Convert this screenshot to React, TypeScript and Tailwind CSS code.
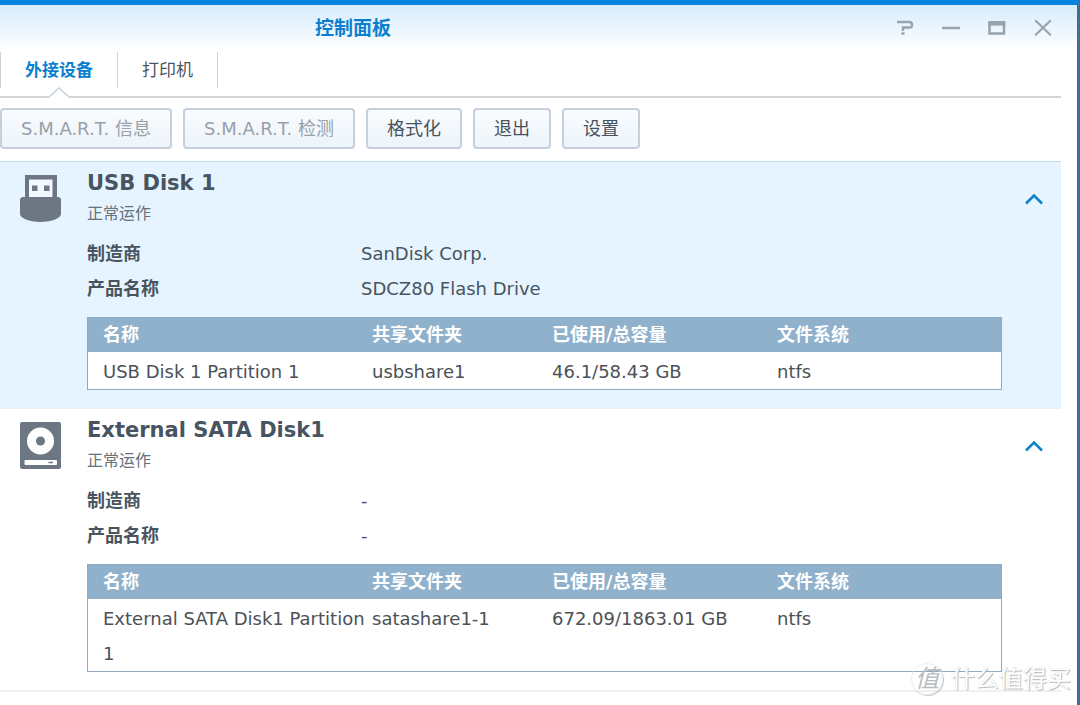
import React from 'react';

type Partition = { name: string; share: string; usage: string; fs: string };

type Device = {
  name: string;
  status: string;
  vendor: string;
  product: string;
  icon: React.ReactNode;
  selected: boolean;
  partitions: Partition[];
};

const UsbIcon = () => (
  <svg className="h-[48px] w-[41px]" viewBox="0 0 41 48" aria-hidden="true">
    <path fill="#6c7783" d="M5 0h32v22h2l2 2v15c0 4-9 8-20.500 8S0 43 0 39V24l2-2h3z" />
    <path fill="#f1f9ff" d="M9 4.500h23.500V22H9z" />
    <path fill="#6c7783" d="M12 10.500h5.500v5.500H12zM24 10.500h5.500v5.500H24z" />
  </svg>
);

const SataIcon = () => (
  <svg className="h-[48px] w-[41px]" viewBox="0 0 41 48" aria-hidden="true">
    <rect width="41" height="47" rx="2" fill="#6c7783" />
    <circle cx="20.500" cy="19" r="13.500" fill="#fff" />
    <circle cx="20.500" cy="19" r="4.500" fill="#6c7783" />
    <rect x="4.500" y="38" width="32.500" height="5" rx="1" fill="#fff" />
    <path d="M28.500 40.500h4.500" stroke="#6c7783" strokeWidth="1.500" />
  </svg>
);

const devices: Device[] = [
  {
    name: 'USB Disk 1',
    status: '正常运作',
    vendor: 'SanDisk Corp.',
    product: 'SDCZ80 Flash Drive',
    icon: <UsbIcon />,
    selected: true,
    partitions: [{ name: 'USB Disk 1 Partition 1', share: 'usbshare1', usage: '46.1/58.43 GB', fs: 'ntfs' }],
  },
  {
    name: 'External SATA Disk1',
    status: '正常运作',
    vendor: '-',
    product: '-',
    icon: <SataIcon />,
    selected: false,
    partitions: [
      { name: 'External SATA Disk1 Partition 1', share: 'satashare1-1', usage: '672.09/1863.01 GB', fs: 'ntfs' },
    ],
  },
];

const actions = [
  { label: 'S.M.A.R.T. 信息', disabled: true },
  { label: 'S.M.A.R.T. 检测', disabled: true },
  { label: '格式化', disabled: false },
  { label: '退出', disabled: false },
  { label: '设置', disabled: false },
];

const windowControls = [
  {
    label: '帮助',
    icon: <path d="M1 3h12.500q2.500 0 2.500 2.800t-2.500 2.700H7V12M5.500 14.500h3" strokeWidth="2.500" />,
  },
  { label: '最小化', icon: <path d="M0 9h18" strokeWidth="2.500" /> },
  {
    label: '最大化',
    icon: (
      <>
        <path d="M1.500 3v11.500h14.500V3" strokeWidth="2.500" />
        <path d="M.300 4.300h17" strokeWidth="4.600" />
      </>
    ),
  },
  { label: '关闭', icon: <path d="M1.200 1.200l15.600 15M16.800 1.200l-15.600 15" strokeWidth="2.200" /> },
];

const TitleBar = () => (
  <header className="flex h-[47px] items-center bg-linear-to-b from-[#d7ecfb] to-white pr-[25px] pl-[315px]">
    <h1 className="text-[19px] font-bold text-[#0b7fcf]">控制面板</h1>
    <div className="ml-auto flex items-center gap-7">
      {windowControls.map((control) => (
        <button key={control.label} type="button" aria-label={control.label}>
          <svg className="h-[19px] w-[18px]" viewBox="0 0 18 19" fill="none" stroke="#98a3ad">
            {control.icon}
          </svg>
        </button>
      ))}
    </div>
  </header>
);

const Tabs = () => (
  <nav className="relative flex h-[46px] border-b-2 border-[#d0d3d7] text-[17px]">
    <a
      href="#external"
      aria-current="page"
      className="flex h-9 items-center border-x border-[#ccd2d8] px-6 pt-0.5 font-bold text-[#0b7fcf]"
    >
      外接设备
    </a>
    <a href="#printer" className="flex h-9 items-center border-r border-[#ccd2d8] px-6 pt-0.5 text-[#4b555f]">
      打印机
    </a>
    <svg className="absolute -bottom-0.5 left-[49px] h-[11px] w-5" viewBox="0 0 20 11" aria-hidden="true">
      <path d="M0 10L10 1l10 9v1H0z" fill="#fff" />
      <path d="M0 10L10 1l10 9" fill="none" stroke="#c6d0da" strokeWidth="1.500" />
    </svg>
  </nav>
);

const PartitionTable = ({ partitions }: { partitions: Partition[] }) => (
  <table className="mt-[11px] w-full table-fixed border-separate border-spacing-0 border border-[#8fa9c0] bg-white text-left">
    <thead className="bg-[#8fb1cc] leading-[34px] text-white">
      <tr>
        <th className="w-[284px] pl-[15px]">名称</th>
        <th className="w-[180px]">共享文件夹</th>
        <th className="w-[225px]">已使用/总容量</th>
        <th>文件系统</th>
      </tr>
    </thead>
    <tbody className="align-top leading-[35px] text-[#4b5157]">
      {partitions.map((partition) => (
        <tr key={partition.name}>
          <td className="pt-0.5 pl-[15px]">{partition.name}</td>
          <td className="pt-0.5">{partition.share}</td>
          <td className="pt-0.5">{partition.usage}</td>
          <td className="pt-0.5">{partition.fs}</td>
        </tr>
      ))}
    </tbody>
  </table>
);

const DeviceSection = ({ device }: { device: Device }) => (
  <section
    className={
      device.selected
        ? 'flex border-t border-[#c6dbe8] bg-[#e5f4fe] pt-[5px] pb-[18px]'
        : 'flex border-t border-[#edf1f4] bg-white pt-[5px] pb-[18px]'
    }
  >
    <div className="w-[87px] shrink-0 pt-2 pl-5">{device.icon}</div>
    <div className="min-w-0 flex-1 text-[18px] text-[#48545f]">
      <h2 className="text-[21px] leading-8 font-bold">{device.name}</h2>
      <p className="mb-[7px] text-base leading-[30px] text-[#66717b]">{device.status}</p>
      <dl className="grid grid-cols-[274px_1fr] leading-[35px]">
        <dt className="font-bold">制造商</dt>
        <dd>{device.vendor}</dd>
        <dt className="font-bold">产品名称</dt>
        <dd>{device.product}</dd>
      </dl>
      <PartitionTable partitions={device.partitions} />
    </div>
    <div className="w-[59px] shrink-0 pt-[21px] pl-[22px]">
      <button type="button" aria-label="收起" aria-expanded="true">
        <svg className="h-5 w-5" viewBox="0 0 20 20" fill="none" stroke="#0b83c6" strokeWidth="2.500">
          <path d="M2 15.500l8-8 8 8" />
        </svg>
      </button>
    </div>
  </section>
);

const Watermark = () => (
  <div className="pointer-events-none absolute right-1.5 bottom-2.5 flex items-center gap-2 text-[24px] leading-8 text-white [text-shadow:1px_1px_1px_#b4b7ba,0_0_1px_#d0d3d6]">
    <span className="flex h-8 w-8 items-center justify-center rounded-full border border-[#eceef0] text-[#b9bcbf] italic shadow-[1px_1px_1px_#c4c7ca] [text-shadow:none]">
      值
    </span>
    什么值得买
  </div>
);

export default function App() {
  return (
    <div className="relative min-h-screen border-t-[5px] border-r-[3px] border-t-[#0583df] border-r-[#426d96] bg-white font-['DejaVu_Sans','Noto_Sans_CJK_SC',sans-serif]">
      <TitleBar />
      <main className="pr-4">
        <Tabs />
        <div className="flex gap-[11px] pt-2.5 pb-3 text-[18px]">
          {actions.map((action) => (
            <button
              key={action.label}
              type="button"
              disabled={action.disabled}
              className="h-[41px] rounded-sm border-2 border-[#c5d0dc] bg-linear-to-b from-[#f9fcff] to-[#edf4fa] px-[19px] whitespace-nowrap text-[#48525c] disabled:text-[#98a0a8]"
            >
              {action.label}
            </button>
          ))}
        </div>
        <div className="border-b-2 border-[#eef0f2]">
          {devices.map((device) => (
            <DeviceSection key={device.name} device={device} />
          ))}
        </div>
      </main>
      <Watermark />
    </div>
  );
}
